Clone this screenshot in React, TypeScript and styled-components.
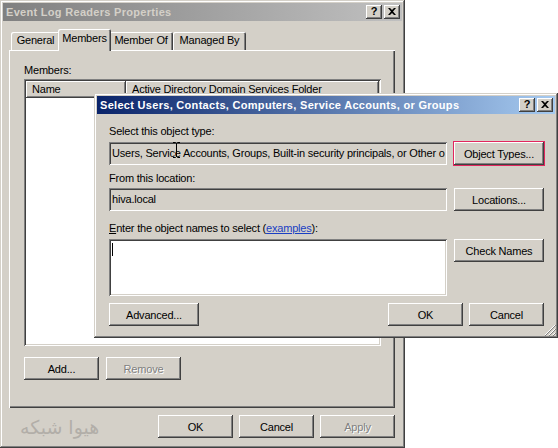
import React from 'react';
import styled, { createGlobalStyle, css } from 'styled-components';

const face = '#d4d0c8';

const GlobalStyle = createGlobalStyle`
    html, body {
        margin: 0;
        padding: 0;
        background: #fff;
    }
    body {
        font-family: "Liberation Sans", Arial, sans-serif;
        font-size: 11px;
        letter-spacing: -0.2px;
        color: #000;
    }
`;

const raised = css`
    box-shadow: inset -1px -1px #404040, inset 1px 1px #fff, inset -2px -2px #808080, inset 2px 2px ${face};
`;

const sunken = css`
    box-shadow: inset 1px 1px #808080, inset -1px -1px #fff, inset 2px 2px #404040, inset -2px -2px ${face};
`;

const Desktop = styled.div`
    position: relative;
    width: 558px;
    height: 448px;
    overflow: hidden;
    background: #fff;
`;

const Window = styled.div<{ $x: number; $y: number; $w: number; $h: number }>`
    position: absolute;
    left: ${(p) => p.$x}px;
    top: ${(p) => p.$y}px;
    width: ${(p) => p.$w}px;
    height: ${(p) => p.$h}px;
    box-sizing: border-box;
    padding: 3px;
    background: ${face};
    box-shadow: inset -1px -1px #404040, inset 1px 1px ${face}, inset -2px -2px #808080, inset 2px 2px #fff;
    display: flex;
    flex-direction: column;
`;

const TitleBar = styled.div<{ $active?: boolean }>`
    height: 18px;
    flex: none;
    display: flex;
    align-items: center;
    justify-content: space-between;
    padding: 0 2px 0 3px;
    background: ${(p) =>
        p.$active ? 'linear-gradient(to right, #0a246a, #a6caf0)' : 'linear-gradient(to right, #808080, #c0c0c0)'};
    color: ${(p) => (p.$active ? '#fff' : face)};
`;

const TitleText = styled.span`
    font-weight: bold;
    font-size: 11px;
    letter-spacing: 0.3px;
    white-space: nowrap;
`;

const TitleButtons = styled.div`
    display: flex;
    gap: 2px;
`;

const TitleButton = styled.span`
    width: 16px;
    height: 14px;
    box-sizing: border-box;
    background: ${face};
    ${raised};
    display: flex;
    align-items: center;
    justify-content: center;
    color: #000;
    font-weight: bold;
    font-size: 11px;
    letter-spacing: 0;
    line-height: 1;
    padding-bottom: 1px;
`;

const Button = styled.button<{ $w: number }>`
    width: ${(p) => p.$w}px;
    height: 23px;
    flex: none;
    padding: 0;
    border: none;
    background: ${face};
    ${raised};
    font: inherit;
    letter-spacing: inherit;
    color: #000;

    &:disabled {
        color: #808080;
        text-shadow: 1px 1px #fff;
    }
`;

const FocusFrame = styled.div`
    flex: none;
    display: flex;
    margin: -1px;
    border: 1px solid #e2265e;
`;

/* back window */

const Body = styled.div`
    display: flex;
    flex-direction: column;
    padding: 8px 0 0 6px;
`;

const TabStrip = styled.div`
    height: 21px;
    display: flex;
    align-items: flex-end;
    padding-left: 2px;
    position: relative;
    z-index: 1;
`;

const Tab = styled.div<{ $w: number; $active?: boolean }>`
    width: ${(p) => p.$w}px;
    box-sizing: border-box;
    height: ${(p) => (p.$active ? 22 : 18)}px;
    margin: 0 ${(p) => (p.$active ? -2 : 0)}px ${(p) => (p.$active ? -1 : 0)}px;
    padding-top: ${(p) => (p.$active ? 3 : 2)}px;
    text-align: center;
    line-height: 13px;
    background: ${face};
    border-radius: 2px 2px 0 0;
    box-shadow: inset 1px 1px #fff, inset -1px 0 #404040, inset -2px 0 #808080;
    position: relative;
    z-index: ${(p) => (p.$active ? 2 : 1)};
`;

const Panel = styled.div`
    width: 386px;
    height: 358px;
    box-sizing: border-box;
    padding: 14px 0 0 15px;
    box-shadow: inset 1px 1px #fff, inset -1px -1px #404040, inset -2px -2px #808080;
    display: flex;
    flex-direction: column;
`;

const FieldLabel = styled.div<{ $gap?: number; $top?: number }>`
    line-height: 13px;
    height: 13px;
    margin-top: ${(p) => p.$top ?? 0}px;
    margin-bottom: ${(p) => p.$gap ?? 4}px;
    white-space: nowrap;
`;

const ListView = styled.div`
    width: 357px;
    height: 267px;
    box-sizing: border-box;
    padding: 2px;
    background: #fff;
    ${sunken};
`;

const ListHeader = styled.div`
    display: flex;
    height: 17px;
`;

const HeaderCell = styled.div<{ $w: number }>`
    width: ${(p) => p.$w}px;
    box-sizing: border-box;
    padding: 2px 0 0 6px;
    line-height: 13px;
    background: ${face};
    ${raised};
    white-space: nowrap;
    overflow: hidden;
`;

const ButtonRow = styled.div<{ $gap: number; $top: number }>`
    display: flex;
    gap: ${(p) => p.$gap}px;
    margin-top: ${(p) => p.$top}px;
`;

const Footer = styled.div`
    width: 386px;
    display: flex;
    align-items: center;
    gap: 6px;
    margin-top: 7px;
`;

const Watermark = styled.span`
    font-family: "DejaVu Sans", sans-serif;
    font-size: 19px;
    letter-spacing: 0;
    color: #b2aea8;
    direction: rtl;
    margin: 0 auto 0 11px;
    line-height: 20px;
`;

/* front dialog */

const DialogBody = styled.div`
    display: flex;
    flex-direction: column;
    padding: 11px 11px 8px 12px;
    position: relative;
    flex: 1;
`;

const FieldRow = styled.div`
    display: flex;
    align-items: flex-start;
    gap: 7px;
`;

const Field = styled.div<{ $h?: number; $white?: boolean }>`
    width: 338px;
    height: ${(p) => p.$h ?? 23}px;
    box-sizing: border-box;
    padding: 5px 3px 0;
    line-height: 13px;
    background: ${(p) => (p.$white ? '#fff' : face)};
    ${sunken};
    white-space: nowrap;
    overflow: hidden;
    position: relative;
`;

const Caret = styled.span`
    position: absolute;
    left: 3px;
    top: 4px;
    width: 1px;
    height: 13px;
    background: #000;
`;

const IBeam = styled.svg`
    position: absolute;
    left: 64px;
    top: 0;
`;

const ExamplesLink = styled.a`
    color: #1a3fc4;
    text-decoration: underline;
`;

const Spacer = styled.div`
    flex: 1;
`;

const Grip = styled.svg`
    position: absolute;
    right: -1px;
    bottom: -1px;
`;

function CloseGlyph() {
    return (
        <svg width="8" height="7" viewBox="0 0 8 7">
            <path d="M0 0h2l2 2 2-2h2L5 3.5 8 7H6L4 5 2 7H0l3-3.5z" fill="#000" />
        </svg>
    );
}

function TitleButtonsBox() {
    return (
        <TitleButtons>
            <TitleButton>?</TitleButton>
            <TitleButton>
                <CloseGlyph />
            </TitleButton>
        </TitleButtons>
    );
}

export default function App() {
    return (
        <Desktop>
            <GlobalStyle />
            <Window $x={0} $y={0} $w={405} $h={448}>
                <TitleBar>
                    <TitleText>Event Log Readers Properties</TitleText>
                    <TitleButtonsBox />
                </TitleBar>
                <Body>
                    <TabStrip>
                        <Tab $w={49}>General</Tab>
                        <Tab $w={53} $active>
                            Members
                        </Tab>
                        <Tab $w={64}>Member Of</Tab>
                        <Tab $w={73}>Managed By</Tab>
                    </TabStrip>
                    <Panel>
                        <FieldLabel $gap={2}>Members:</FieldLabel>
                        <ListView>
                            <ListHeader>
                                <HeaderCell $w={100}>Name</HeaderCell>
                                <HeaderCell $w={253}>Active Directory Domain Services Folder</HeaderCell>
                            </ListHeader>
                        </ListView>
                        <ButtonRow $gap={7} $top={11}>
                            <Button $w={75}>Add...</Button>
                            <Button $w={75} disabled>
                                Remove
                            </Button>
                        </ButtonRow>
                    </Panel>
                    <Footer>
                        <Watermark>هیوا شبکه</Watermark>
                        <Button $w={75}>OK</Button>
                        <Button $w={75}>Cancel</Button>
                        <Button $w={75} disabled>
                            Apply
                        </Button>
                    </Footer>
                </Body>
            </Window>

            <Window $x={94} $y={93} $w={464} $h={245}>
                <TitleBar $active>
                    <TitleText>Select Users, Contacts, Computers, Service Accounts, or Groups</TitleText>
                    <TitleButtonsBox />
                </TitleBar>
                <DialogBody>
                    <FieldLabel>Select this object type:</FieldLabel>
                    <FieldRow>
                        <Field>
                            Users, Service Accounts, Groups, Built-in security principals, or Other o
                            <IBeam width="7" height="16" viewBox="0 0 7 16">
                                <path d="M0 .5h2.5L3.5 1.5 4.5.5H7M3.5 1.5v13M0 15.5h2.5l1-1 1 1H7" stroke="#000" fill="none" />
                            </IBeam>
                        </Field>
                        <FocusFrame>
                            <Button $w={90}>Object Types...</Button>
                        </FocusFrame>
                    </FieldRow>
                    <FieldLabel $top={7} $gap={3}>
                        From this location:
                    </FieldLabel>
                    <FieldRow>
                        <Field>hiva.local</Field>
                        <Button $w={90}>Locations...</Button>
                    </FieldRow>
                    <FieldLabel $top={11}>
                        <u>E</u>nter the object names to select (<ExamplesLink>examples</ExamplesLink>):
                    </FieldLabel>
                    <FieldRow>
                        <Field $h={57} $white>
                            <Caret />
                        </Field>
                        <Button $w={90}>Check Names</Button>
                    </FieldRow>
                    <ButtonRow $gap={6} $top={7}>
                        <Button $w={90}>Advanced...</Button>
                        <Spacer />
                        <Button $w={75}>OK</Button>
                        <Button $w={75}>Cancel</Button>
                    </ButtonRow>
                    <Grip width="12" height="12" viewBox="0 0 12 12">
                        <path d="M11 1L1 11M11 5L5 11M11 9L9 11" stroke="#fff" />
                        <path d="M12 1L1 12M12 5L5 12M12 9L9 12" stroke="#808080" />
                    </Grip>
                </DialogBody>
            </Window>
        </Desktop>
    );
}
